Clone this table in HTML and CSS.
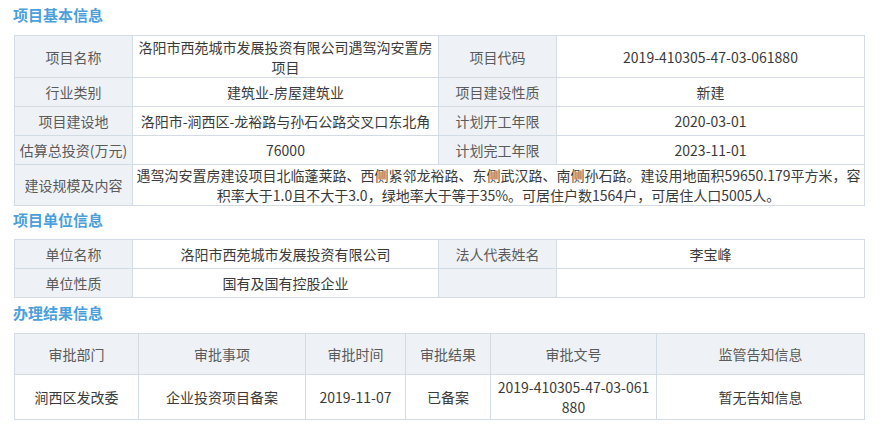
FILE: index.html
```html
<!DOCTYPE html>
<html lang="zh-CN">
<head>
<meta charset="utf-8">
<title>项目信息</title>
<link rel="stylesheet" href="styles.css">
</head>
<body>
<div class="page">
  <h2 class="sec-title first">项目基本信息</h2>
  <table class="info">
    <colgroup><col class="c-l"><col class="c-v"><col class="c-l"><col class="c-v2"></colgroup>
    <tr class="r-tall">
      <th>项目名称</th>
      <td>洛阳市西苑城市发展投资有限公司遇驾沟安置房项目</td>
      <th>项目代码</th>
      <td>2019-410305-47-03-061880</td>
    </tr>
    <tr>
      <th>行业类别</th>
      <td>建筑业-房屋建筑业</td>
      <th>项目建设性质</th>
      <td>新建</td>
    </tr>
    <tr>
      <th>项目建设地</th>
      <td>洛阳市-涧西区-龙裕路与孙石公路交叉口东北角</td>
      <th>计划开工年限</th>
      <td>2020-03-01</td>
    </tr>
    <tr>
      <th>估算总投资(万元)</th>
      <td>76000</td>
      <th>计划完工年限</th>
      <td>2023-11-01</td>
    </tr>
    <tr>
      <th>建设规模及内容</th>
      <td colspan="3" class="wide">遇驾沟安置房建设项目北临蓬莱路、西侧紧邻龙裕路、东侧武汉路、南侧孙石路。建设用地面积59650.179平方米，容积率大于1.0且不大于3.0，绿地率大于等于35%。可居住户数1564户，可居住人口5005人。</td>
    </tr>
  </table>

  <h2 class="sec-title">项目单位信息</h2>
  <table class="info">
    <colgroup><col class="c-l"><col class="c-v"><col class="c-l"><col class="c-v2"></colgroup>
    <tr>
      <th>单位名称</th>
      <td>洛阳市西苑城市发展投资有限公司</td>
      <th>法人代表姓名</th>
      <td>李宝峰</td>
    </tr>
    <tr>
      <th>单位性质</th>
      <td>国有及国有控股企业</td>
      <th></th>
      <td></td>
    </tr>
  </table>

  <h2 class="sec-title third">办理结果信息</h2>
  <table class="result">
    <colgroup>
      <col class="r1"><col class="r2"><col class="r3"><col class="r4"><col class="r5"><col class="r6">
    </colgroup>
    <tr class="head">
      <th>审批部门</th>
      <th>审批事项</th>
      <th>审批时间</th>
      <th>审批结果</th>
      <th>审批文号</th>
      <th>监管告知信息</th>
    </tr>
    <tr class="data">
      <td>涧西区发改委</td>
      <td>企业投资项目备案</td>
      <td>2019-11-07</td>
      <td>已备案</td>
      <td class="code">2019-410305-47-03-061880</td>
      <td>暂无告知信息</td>
    </tr>
  </table>
</div>
</body>
</html>
```

FILE: styles.css
```css
html, body {
  margin: 0;
  padding: 0;
  background: #ffffff;
}

body {
  font-family: "Noto Sans CJK SC", "Noto Sans", sans-serif;
  font-size: 14px;
  color: #3a3a3a;
}

.page {
  padding: 0 0 0 14px;
  width: 850px;
}

.sec-title {
  margin: 3px 0 8px -1px;
  font-size: 15px;
  line-height: 22px;
  font-weight: bold;
  color: #4b9fdc;
}

.sec-title.first {
  margin-top: 0;
  margin-bottom: 9px;
  padding-top: 4px;
}

.sec-title.third {
  margin-top: 4px;
  margin-bottom: 9px;
}

table {
  border-collapse: collapse;
  table-layout: fixed;
  width: 850px;
}

th, td {
  border: 1px solid #d3dce5;
  text-align: center;
  vertical-align: middle;
  line-height: 20px;
  padding: 0 1px;
  font-weight: normal;
}

.info th {
  background: #eef2f6;
  color: #5a5a5a;
  height: 28px;
}

.info td {
  color: #3a3a3a;
  height: 28px;
}

.info .r-tall td,
.info .r-tall th {
  height: 41px;
}

.c-l { width: 118px; }
.c-v { width: 306px; }
.c-v2 { width: 308px; }

.result th {
  background: #eef2f6;
  color: #5a5a5a;
  height: 40px;
}

.result td {
  color: #3a3a3a;
  height: 44px;
}

.result .code {
  word-break: break-all;
  padding: 0 3px;
}

.r1 { width: 124px; }
.r2 { width: 167px; }
.r3 { width: 100px; }
.r4 { width: 85px; }
.r5 { width: 166px; }
.r6 { width: 208px; }
```
